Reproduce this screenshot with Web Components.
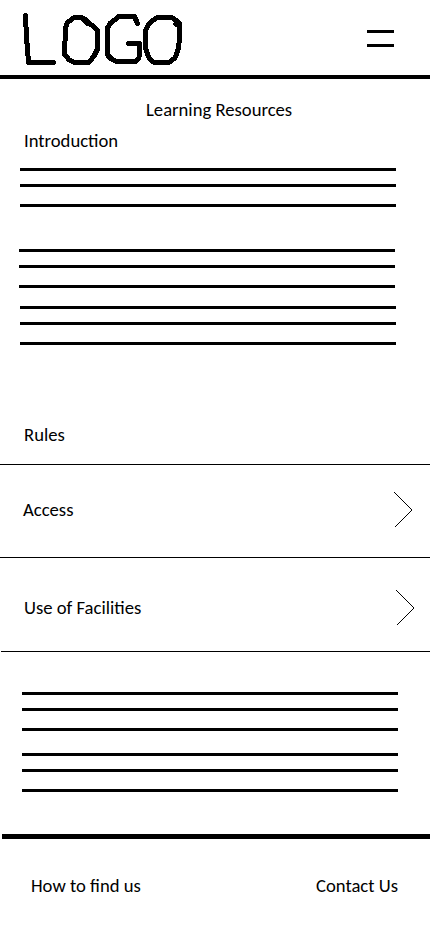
<!DOCTYPE html>
<html lang="en">
<head>
<meta charset="utf-8">
<title>Learning Resources</title>
<style>
body { margin: 0; background: #fff; color: #000; font-family: Carlito, Lato, "Noto Sans", sans-serif; }
</style>
</head>
<body>
<learning-page></learning-page>
<script>
class Base extends HTMLElement {
  constructor() {
    super();
    this.attachShadow({ mode: 'open' }).innerHTML = this.view();
  }
}

customElements.define('text-label', class extends Base {
  view() {
    return `<style>
      :host { display: block; height: 20px; width: max-content; line-height: 20px; font-size: 18.667px; white-space: nowrap; }
    </style><slot></slot>`;
  }
});

/* Placeholder paragraph: three thick rules. */
customElements.define('text-lines', class extends Base {
  view() {
    return `<style>
      :host { display: block; width: 376px; }
      i { display: block; height: 3px; background: #000; }
      i + i { margin-top: 13px; }
      i + i + i { margin-top: 17px; }
    </style><i></i><i></i><i></i>`;
  }
});

customElements.define('site-logo', class extends Base {
  view() {
    return `<style>:host, svg { display: block; }</style>
    <svg width="190" height="75" fill="none" stroke="#000" stroke-width="5" stroke-linecap="round" stroke-linejoin="round" shape-rendering="crispEdges" role="img" aria-label="Logo">
      <path d="M25.5 15.5 26.5 37 28.5 62.5H53.5"/>
      <path d="M87 23.500 81 17H75L67.500 22.500 65.500 28 64.500 54 69 60 75 62.500H89L94 56 97.500 49V30L93 26 88 22.500 84 18.500"/>
      <path d="M137.500 23.500 134.500 16.500H119L110 23.500 107.500 28V55L112 59.500 117 61.500H136L139 58 139.500 43.500H128.500"/>
      <path d="M176 24 178 22.500 173 18 169 17H158L150 22.500 146 29 145.500 48 149 58 154 62.500H169L175 58 178.500 48 179.500 38V23L174 19"/>
    </svg>`;
  }
});

customElements.define('menu-button', class extends Base {
  view() {
    return `<style>
      :host { display: grid; gap: 11px; width: 27px; }
      i { height: 3px; background: #000; }
    </style><i></i><i></i>`;
  }
});

customElements.define('site-header', class extends Base {
  view() {
    return `<style>
      :host { display: flex; justify-content: space-between; box-sizing: border-box; height: 79px; padding-right: 36px; border-bottom: 4px solid #000; }
      menu-button { margin-top: 30px; align-self: flex-start; }
    </style><site-logo></site-logo><menu-button></menu-button>`;
  }
});

customElements.define('link-row', class extends Base {
  view() {
    return `<style>
      :host { display: flex; justify-content: space-between; align-items: flex-start; box-sizing: border-box; }
      svg { display: block; margin-top: var(--icon-top); }
      div { padding-top: var(--text-top); }
    </style><div><slot></slot></div>
    <svg width="19" height="36" fill="none" stroke="#000" stroke-width="1" shape-rendering="crispEdges"><path d="M0.500 0.500 18.500 18.500M17.500 18.500 1 35"/></svg>`;
  }
});

customElements.define('site-footer', class extends Base {
  view() {
    return `<style>
      :host { display: flex; justify-content: space-between; box-sizing: border-box; height: 98px; margin-left: 2px; padding: 37px 32px 0 29px; border-top: 5px solid #000; }
    </style><text-label>How to find us</text-label><text-label>Contact Us</text-label>`;
  }
});

customElements.define('learning-page', class extends Base {
  view() {
    return `<style>
      :host { display: block; width: 430px; height: 932px; overflow: hidden; }
      main { display: flow-root; }
      .title { margin: 21px 0 0 146px; }
      .intro { margin: 11px 0 17px 24px; }
      .a { margin-left: 20px; }
      .b { margin: 42px 0 18px 19px; }
      .rules { margin: 80px 0 19px 24px; }
      .row { border-top: 1px solid #000; }
      .access { height: 93px; padding: 0 17px 0 23px; --text-top: 35px; --icon-top: 27px; }
      .use { height: 94px; padding: 0 15px 0 24px; --text-top: 40px; --icon-top: 32px; }
      .end { height: 1px; margin-left: 1px; background: #000; }
      .c { margin: 40px 0 0 22px; }
      .d { margin: 22px 0 42px 22px; }
    </style>
    <site-header></site-header>
    <main>
      <text-label class="title">Learning Resources</text-label>
      <text-label class="intro">Introduction</text-label>
      <text-lines class="a"></text-lines>
      <text-lines class="b"></text-lines>
      <text-lines class="a"></text-lines>
      <text-label class="rules">Rules</text-label>
      <link-row class="row access"><text-label>Access</text-label></link-row>
      <link-row class="row use"><text-label>Use of Facilities</text-label></link-row>
      <div class="end"></div>
      <text-lines class="c"></text-lines>
      <text-lines class="d"></text-lines>
    </main>
    <site-footer></site-footer>`;
  }
});
</script>
</body>
</html>
